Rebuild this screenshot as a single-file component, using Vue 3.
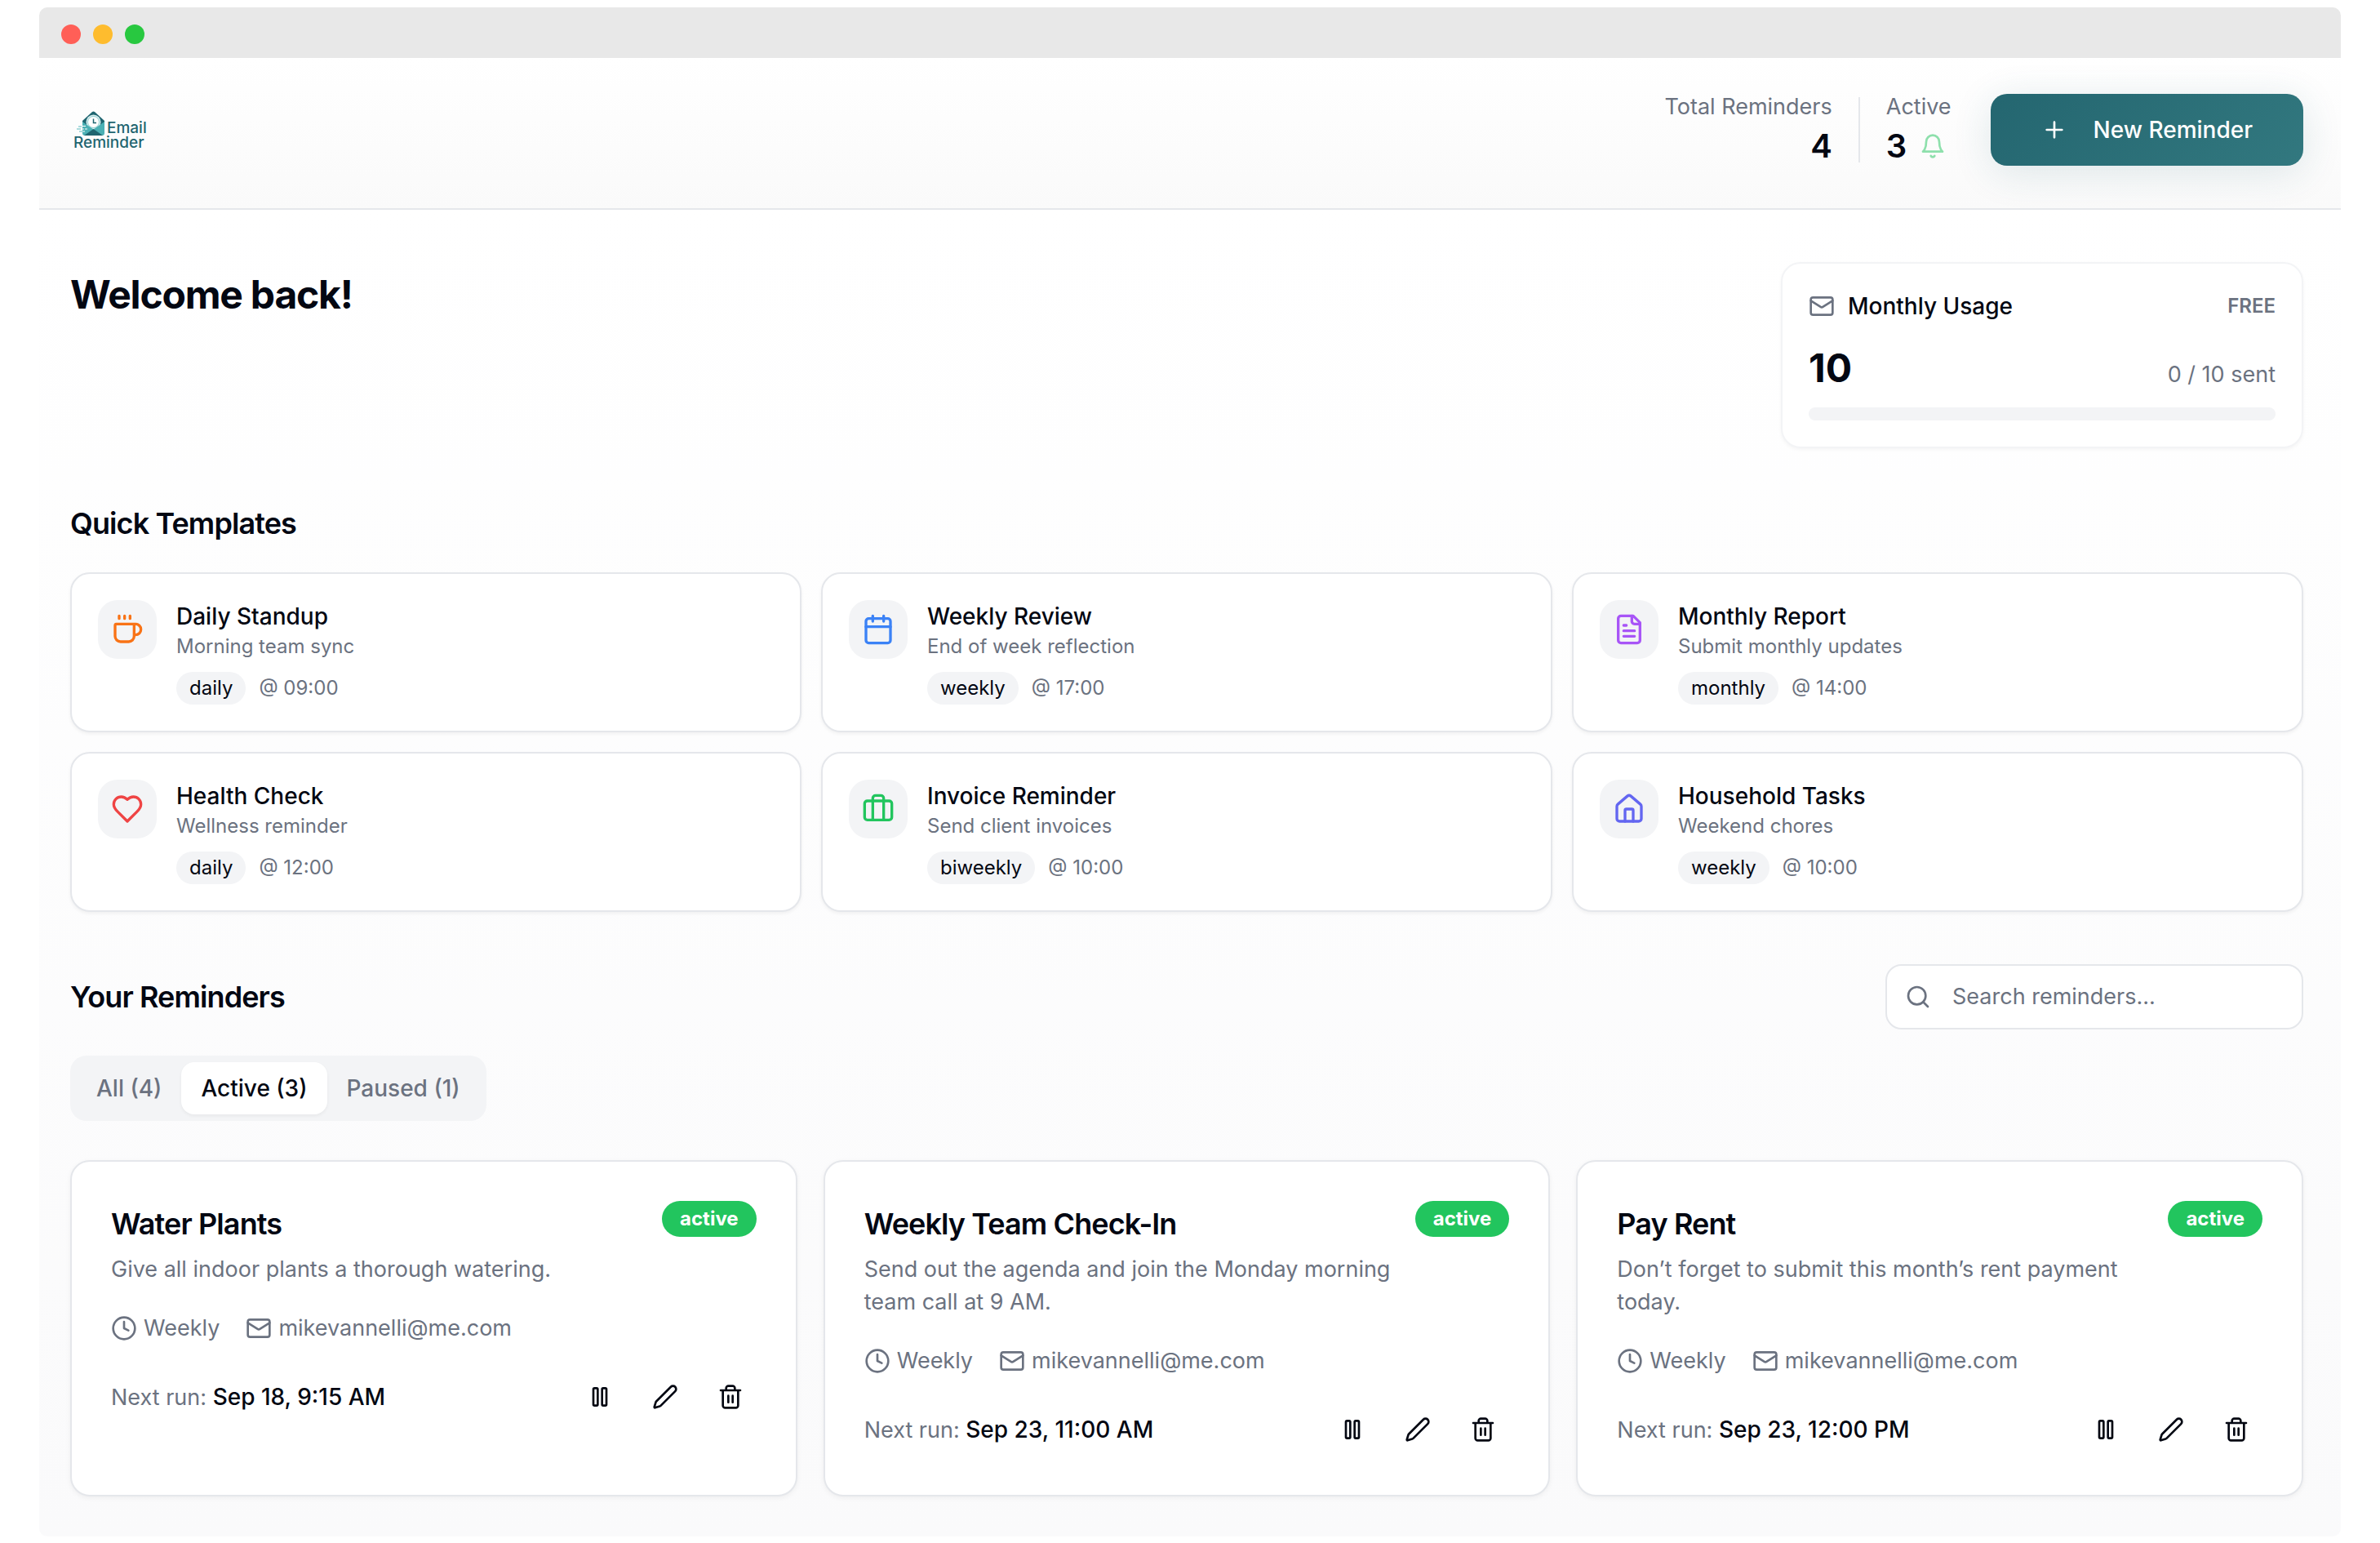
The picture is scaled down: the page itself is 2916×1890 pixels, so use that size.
<script setup>
import { computed, h, ref } from 'vue'

const shapes = {
  plus: [['path', { d: 'M5 12h14M12 5v14' }]],
  bell: [
    ['path', { d: 'M6 8a6 6 0 0 1 12 0c0 7 3 9 3 9H3s3-2 3-9' }],
    ['path', { d: 'M10.3 21a1.94 1.94 0 0 0 3.4 0' }],
  ],
  mail: [
    ['rect', { x: 2, y: 4, width: 20, height: 16, rx: 2 }],
    ['path', { d: 'm22 7-8.97 5.7a1.94 1.94 0 0 1-2.06 0L2 7' }],
  ],
  coffee: [
    ['path', { d: 'M10 2v2M14 2v2M6 2v2' }],
    ['path', { d: 'M16 8a1 1 0 0 1 1 1v8a4 4 0 0 1-4 4H7a4 4 0 0 1-4-4V9a1 1 0 0 1 1-1h14a4 4 0 1 1 0 8h-1' }],
  ],
  calendar: [
    ['path', { d: 'M8 2v4M16 2v4M3 10h18' }],
    ['rect', { x: 3, y: 4, width: 18, height: 18, rx: 2 }],
  ],
  file: [
    ['path', { d: 'M15 2H6a2 2 0 0 0-2 2v16a2 2 0 0 0 2 2h12a2 2 0 0 0 2-2V7Z' }],
    ['path', { d: 'M14 2v4a2 2 0 0 0 2 2h4M10 9H8M16 13H8M16 17H8' }],
  ],
  heart: [
    ['path', { d: 'M19 14c1.49-1.46 3-3.21 3-5.5A5.5 5.5 0 0 0 16.5 3c-1.76 0-3 .5-4.5 2-1.5-1.5-2.74-2-4.5-2A5.5 5.5 0 0 0 2 8.5c0 2.3 1.5 4.05 3 5.5l7 7Z' }],
  ],
  briefcase: [
    ['path', { d: 'M16 20V4a2 2 0 0 0-2-2h-4a2 2 0 0 0-2 2v16' }],
    ['rect', { x: 2, y: 6, width: 20, height: 14, rx: 2 }],
  ],
  house: [
    ['path', { d: 'M15 21v-8a1 1 0 0 0-1-1h-4a1 1 0 0 0-1 1v8' }],
    ['path', { d: 'M3 10a2 2 0 0 1 .709-1.528l7-5.999a2 2 0 0 1 2.582 0l7 5.999A2 2 0 0 1 21 10v9a2 2 0 0 1-2 2H5a2 2 0 0 1-2-2z' }],
  ],
  search: [
    ['circle', { cx: 11, cy: 11, r: 8 }],
    ['path', { d: 'm21 21-4.3-4.3' }],
  ],
  clock: [
    ['circle', { cx: 12, cy: 12, r: 10 }],
    ['path', { d: 'M12 6v6l4 2' }],
  ],
  pause: [
    ['rect', { x: 14, y: 4, width: 4, height: 16, rx: 1 }],
    ['rect', { x: 6, y: 4, width: 4, height: 16, rx: 1 }],
  ],
  pencil: [
    ['path', { d: 'M21.174 6.812a1 1 0 0 0-3.986-3.987L3.842 16.174a2 2 0 0 0-.5.83l-1.321 4.352a.5.5 0 0 0 .623.622l4.353-1.32a2 2 0 0 0 .83-.497z' }],
  ],
  trash: [
    ['path', { d: 'M3 6h18M19 6v14c0 1-1 2-2 2H7c-1 0-2-1-2-2V6M8 6V4c0-1 1-2 2-2h4c1 0 2 1 2 2v2M10 11v6M14 11v6' }],
  ],
}

const Icon = (props) =>
  h(
    'svg',
    {
      viewBox: '0 0 24 24',
      fill: 'none',
      stroke: 'currentColor',
      'stroke-width': 2,
      'stroke-linecap': 'round',
      'stroke-linejoin': 'round',
      'aria-hidden': 'true',
    },
    shapes[props.name].map(([tag, attrs]) => h(tag, attrs)),
  )
Icon.props = ['name']

const templates = [
  { icon: 'coffee', tone: 'orange', title: 'Daily Standup', text: 'Morning team sync', every: 'daily', time: '09:00' },
  { icon: 'calendar', tone: 'blue', title: 'Weekly Review', text: 'End of week reflection', every: 'weekly', time: '17:00' },
  { icon: 'file', tone: 'purple', title: 'Monthly Report', text: 'Submit monthly updates', every: 'monthly', time: '14:00' },
  { icon: 'heart', tone: 'red', title: 'Health Check', text: 'Wellness reminder', every: 'daily', time: '12:00' },
  { icon: 'briefcase', tone: 'green', title: 'Invoice Reminder', text: 'Send client invoices', every: 'biweekly', time: '10:00' },
  { icon: 'house', tone: 'indigo', title: 'Household Tasks', text: 'Weekend chores', every: 'weekly', time: '10:00' },
]

const reminders = [
  { title: 'Water Plants', text: 'Give all indoor plants a thorough watering.', every: 'Weekly', email: 'mikevannelli@me.com', next: 'Sep 18, 9:15 AM' },
  { title: 'Weekly Team Check-In', text: 'Send out the agenda and join the Monday morning team call at 9 AM.', every: 'Weekly', email: 'mikevannelli@me.com', next: 'Sep 23, 11:00 AM' },
  { title: 'Pay Rent', text: 'Don’t forget to submit this month’s rent payment today.', every: 'Weekly', email: 'mikevannelli@me.com', next: 'Sep 23, 12:00 PM' },
]

const tabs = [
  { id: 'all', label: 'All (4)' },
  { id: 'active', label: 'Active (3)' },
  { id: 'paused', label: 'Paused (1)' },
]

const tab = ref('active')
const query = ref('')
const shown = computed(() =>
  tab.value === 'paused'
    ? []
    : reminders.filter((r) => r.title.toLowerCase().includes(query.value.toLowerCase())),
)
</script>

<template>
  <div class="window">
    <div class="titlebar">
      <span class="dot close"></span>
      <span class="dot minimize"></span>
      <span class="dot expand"></span>
    </div>

    <header class="header">
      <a class="logo" href="#" aria-label="Email Reminder">
        <span class="logo-top">
          <svg class="logo-mark" viewBox="0 0 34 30" aria-hidden="true">
            <path d="M7 12 19 1q1.500-1 3 0l12 11v6H7z" fill="#1f6570" />
            <circle cx="20.500" cy="13.500" r="9" fill="#d9eeef" />
            <circle cx="20.500" cy="13.500" r="7" fill="#fff" stroke="#4bb0b4" stroke-width="0.600" />
            <path d="M20.500 9.500v5h3.500" fill="none" stroke="#1f6570" stroke-width="1.500" />
            <path d="M7 13l13.500 9.500L34 13v14q0 3-3 3H10q-3 0-3-3z" fill="#4bb0b4" />
            <path d="M9 30l11.500-8L32 30z" fill="#1f6570" />
            <path d="M2 19h4M0 22h5M3 25h4" stroke="#8fd0d2" stroke-width="1.500" />
            <path d="M7 18.500h4M7 22h2M10 22h3M7 25h3" stroke="#fff" stroke-width="1" />
          </svg>
          <span>Email</span>
        </span>
        <span>Reminder</span>
      </a>

      <div class="header-side">
        <dl class="stats">
          <div class="stat total">
            <dt>Total Reminders</dt>
            <dd>4</dd>
          </div>
          <div class="stat running">
            <dt>Active</dt>
            <dd>3 <Icon name="bell" class="icon bell" /></dd>
          </div>
        </dl>
        <button class="new" type="button"><Icon name="plus" class="icon" />New Reminder</button>
      </div>
    </header>

    <main class="main">
      <section class="intro">
        <h1>Welcome back!</h1>
        <div class="usage">
          <div class="usage-row">
            <span class="usage-title"><Icon name="mail" class="icon muted" />Monthly Usage</span>
            <span class="plan">FREE</span>
          </div>
          <div class="usage-row amount">
            <strong>10</strong>
            <span class="muted">0 / 10 sent</span>
          </div>
          <div class="track" role="progressbar" aria-label="Monthly usage" aria-valuemin="0" aria-valuemax="10" aria-valuenow="0"></div>
        </div>
      </section>

      <section class="templates">
        <h2>Quick Templates</h2>
        <div class="template-grid">
          <button v-for="t in templates" :key="t.title" class="template" type="button">
            <span class="tile" :class="t.tone"><Icon :name="t.icon" class="tile-icon" /></span>
            <span class="template-body">
              <span class="template-title">{{ t.title }}</span>
              <span class="template-text">{{ t.text }}</span>
              <span class="schedule">
                <span class="pill">{{ t.every }}</span>
                <span>@ {{ t.time }}</span>
              </span>
            </span>
          </button>
        </div>
      </section>

      <section class="reminders">
        <div class="reminders-head">
          <h2>Your Reminders</h2>
          <label class="search">
            <Icon name="search" class="icon muted" />
            <input v-model="query" type="text" aria-label="Search reminders" placeholder="Search reminders..." />
          </label>
        </div>
        <div class="tabs" role="tablist">
          <button
            v-for="t in tabs"
            :key="t.id"
            class="tab"
            :class="{ selected: tab === t.id }"
            type="button"
            role="tab"
            :aria-selected="tab === t.id"
            @click="tab = t.id"
          >{{ t.label }}</button>
        </div>
        <div class="reminder-grid">
          <article v-for="r in shown" :key="r.title" class="reminder">
            <div class="reminder-top">
              <div class="reminder-copy">
                <h3>{{ r.title }}</h3>
                <p>{{ r.text }}</p>
              </div>
              <span class="badge">active</span>
            </div>
            <div class="meta">
              <span><Icon name="clock" class="icon" />{{ r.every }}</span>
              <span><Icon name="mail" class="icon" />{{ r.email }}</span>
            </div>
            <div class="reminder-foot">
              <span class="muted">Next run: <time>{{ r.next }}</time></span>
              <span class="actions">
                <button type="button" aria-label="Pause"><Icon name="pause" class="icon" /></button>
                <button type="button" aria-label="Edit"><Icon name="pencil" class="icon" /></button>
                <button type="button" aria-label="Delete"><Icon name="trash" class="icon" /></button>
              </span>
            </div>
          </article>
        </div>
      </section>
    </main>
  </div>
</template>

<style>
body {
  background: #fff;
}
</style>

<style scoped>
* {
  box-sizing: border-box;
  margin: 0;
}

.window {
  margin: 9px 48px;
  border-radius: 10px;
  overflow: hidden;
  color: #030712;
  font: 400 27px/40px Inter, 'Liberation Sans', sans-serif;
}

button,
input {
  padding: 0;
  border: 0;
  background: none;
  color: inherit;
  font: inherit;
}

.icon {
  flex: none;
  width: 32px;
  height: 32px;
}

.muted {
  color: #6b7280;
}

.titlebar {
  display: flex;
  align-items: center;
  gap: 15px;
  height: 62px;
  padding: 4px 27px 0;
  background: #e8e8e8;
}

.dot {
  width: 24px;
  height: 24px;
  border-radius: 50%;
}

.close {
  background: #ff5f57;
}

.minimize {
  background: #febc2e;
}

.expand {
  background: #28c840;
}

.header {
  display: flex;
  align-items: center;
  justify-content: space-between;
  padding: 44px 46px 52px 38px;
  border-bottom: 2px solid #e5e7eb;
  background: linear-gradient(#fff, #fafafa);
}

.logo {
  display: flex;
  flex-direction: column;
  padding: 2px 0 0 4px;
  color: #1f6570;
  font-size: 19px;
  font-weight: 500;
  line-height: 18px;
  text-decoration: none;
}

.logo-top {
  display: flex;
  align-items: flex-end;
  gap: 3px;
  padding-left: 4px;
}

.logo-mark {
  width: 34px;
  height: 30px;
}

.header-side {
  display: flex;
  align-items: center;
  gap: 48px;
}

.stats {
  display: flex;
}

.stat dt {
  margin-bottom: 16px;
  color: #6b7280;
  line-height: 24px;
}

.stat dd {
  display: flex;
  align-items: center;
  gap: 16px;
  font-size: 40px;
  font-weight: 600;
  line-height: 40px;
}

.total {
  padding-right: 32px;
  border-right: 2px solid #e5e7eb;
}

.total dd {
  justify-content: flex-end;
}

.running {
  padding-left: 32px;
}

.bell {
  color: #22c55e;
  opacity: 0.5;
}

.new {
  display: flex;
  align-items: center;
  gap: 32px;
  height: 88px;
  padding: 0 62px;
  border-radius: 20px;
  background: linear-gradient(135deg, #246670, #32787f);
  box-shadow: 0 8px 48px rgba(36, 102, 112, 0.14);
  color: #fff;
  font-size: 28px;
  font-weight: 500;
}

.main {
  display: flex;
  flex-direction: column;
  gap: 64px;
  padding: 64px 46px 49px 38px;
  background: linear-gradient(#fff, #fafafb);
}

.intro {
  display: flex;
  align-items: flex-start;
  justify-content: space-between;
}

h1 {
  font-size: 48px;
  font-weight: 700;
  line-height: 80px;
  letter-spacing: -0.025em;
}

h2,
h3 {
  font-size: 36px;
  font-weight: 600;
  line-height: 56px;
  letter-spacing: -0.025em;
}

.usage {
  width: 640px;
  padding: 32px;
  border: 2px solid #f3f4f6;
  border-radius: 24px;
  background: #fff;
  box-shadow: 0 2px 4px rgba(0, 0, 0, 0.04);
}

.usage-row {
  display: flex;
  align-items: center;
  justify-content: space-between;
}

.usage-title {
  display: flex;
  align-items: center;
  gap: 16px;
  font-size: 28px;
  font-weight: 500;
}

.plan {
  color: #6b7280;
  font-size: 24px;
  font-weight: 600;
}

.amount {
  align-items: baseline;
  padding: 24px 0 16px;
}

.amount strong {
  font-size: 48px;
  font-weight: 700;
  line-height: 64px;
}

.track {
  height: 16px;
  border-radius: 8px;
  background: #f3f4f6;
}

.templates {
  display: flex;
  flex-direction: column;
  gap: 32px;
}

.template-grid {
  display: grid;
  grid-template-columns: repeat(3, 1fr);
  gap: 24px;
}

.template {
  display: flex;
  align-items: flex-start;
  gap: 24px;
  padding: 32px;
  border: 2px solid #e5e7eb;
  border-radius: 24px;
  background: #fff;
  box-shadow: 0 2px 4px rgba(0, 0, 0, 0.05);
  text-align: left;
}

.tile {
  display: grid;
  place-items: center;
  width: 72px;
  height: 72px;
  border-radius: 24px;
  background: #f3f4f6;
}

.tile-icon {
  width: 40px;
  height: 40px;
}

.orange {
  color: #f97316;
}

.blue {
  color: #3b82f6;
}

.purple {
  color: #a855f7;
}

.red {
  color: #ef4444;
}

.green {
  color: #22c55e;
}

.indigo {
  color: #6366f1;
}

.template-body {
  display: flex;
  flex-direction: column;
}

.template-title {
  font-size: 28px;
  font-weight: 500;
}

.template-text {
  color: #6b7280;
  font-size: 24px;
  line-height: 34px;
}

.schedule {
  display: flex;
  align-items: center;
  gap: 16px;
  padding-top: 14px;
  color: #6b7280;
  font-size: 24px;
}

.pill {
  padding: 0 16px;
  border-radius: 20px;
  background: #f3f4f6;
  color: #030712;
}

.reminders-head {
  display: flex;
  align-items: center;
  justify-content: space-between;
  margin-bottom: 32px;
}

.search {
  display: flex;
  align-items: center;
  gap: 26px;
  width: 512px;
  height: 80px;
  padding: 0 22px;
  border: 2px solid #e5e7eb;
  border-radius: 20px;
  background: #fff;
}

.search input {
  flex: 1;
  min-width: 0;
  outline: 0;
}

.search input::placeholder {
  color: #6b7280;
  opacity: 1;
}

.tabs {
  display: flex;
  width: fit-content;
  margin-bottom: 48px;
  padding: 8px;
  border-radius: 20px;
  background: #f3f4f6;
}

.tab {
  height: 64px;
  padding: 0 24px;
  border-radius: 16px;
  color: #6b7280;
  font-size: 28px;
  font-weight: 500;
}

.tab.selected {
  background: #fff;
  box-shadow: 0 2px 4px rgba(0, 0, 0, 0.05);
  color: #030712;
}

.reminder-grid {
  display: grid;
  grid-template-columns: repeat(3, 1fr);
  gap: 32px;
}

.reminder {
  display: flex;
  flex-direction: column;
  gap: 32px;
  padding: 48px;
  border: 2px solid #e5e7eb;
  border-radius: 24px;
  background: #fff;
  box-shadow: 0 2px 6px rgba(0, 0, 0, 0.05);
}

.reminder-top {
  display: flex;
  align-items: flex-start;
  justify-content: space-between;
  gap: 16px;
}

.reminder-copy {
  display: flex;
  flex-direction: column;
  gap: 8px;
}

.reminder-copy p {
  color: #6b7280;
}

.badge {
  padding: 0 22px;
  border-radius: 22px;
  background: #22c55e;
  color: #fff;
  font-size: 24px;
  font-weight: 700;
  line-height: 44px;
}

.meta {
  display: flex;
  gap: 32px;
  color: #6b7280;
}

.meta span {
  display: flex;
  align-items: center;
  gap: 8px;
}

.reminder-foot {
  display: flex;
  align-items: center;
  justify-content: space-between;
}

.reminder-foot time {
  color: #030712;
  font-size: 28px;
  font-weight: 500;
}

.actions {
  display: flex;
  gap: 16px;
}

.actions button {
  display: grid;
  place-items: center;
  width: 64px;
  height: 64px;
}
</style>
